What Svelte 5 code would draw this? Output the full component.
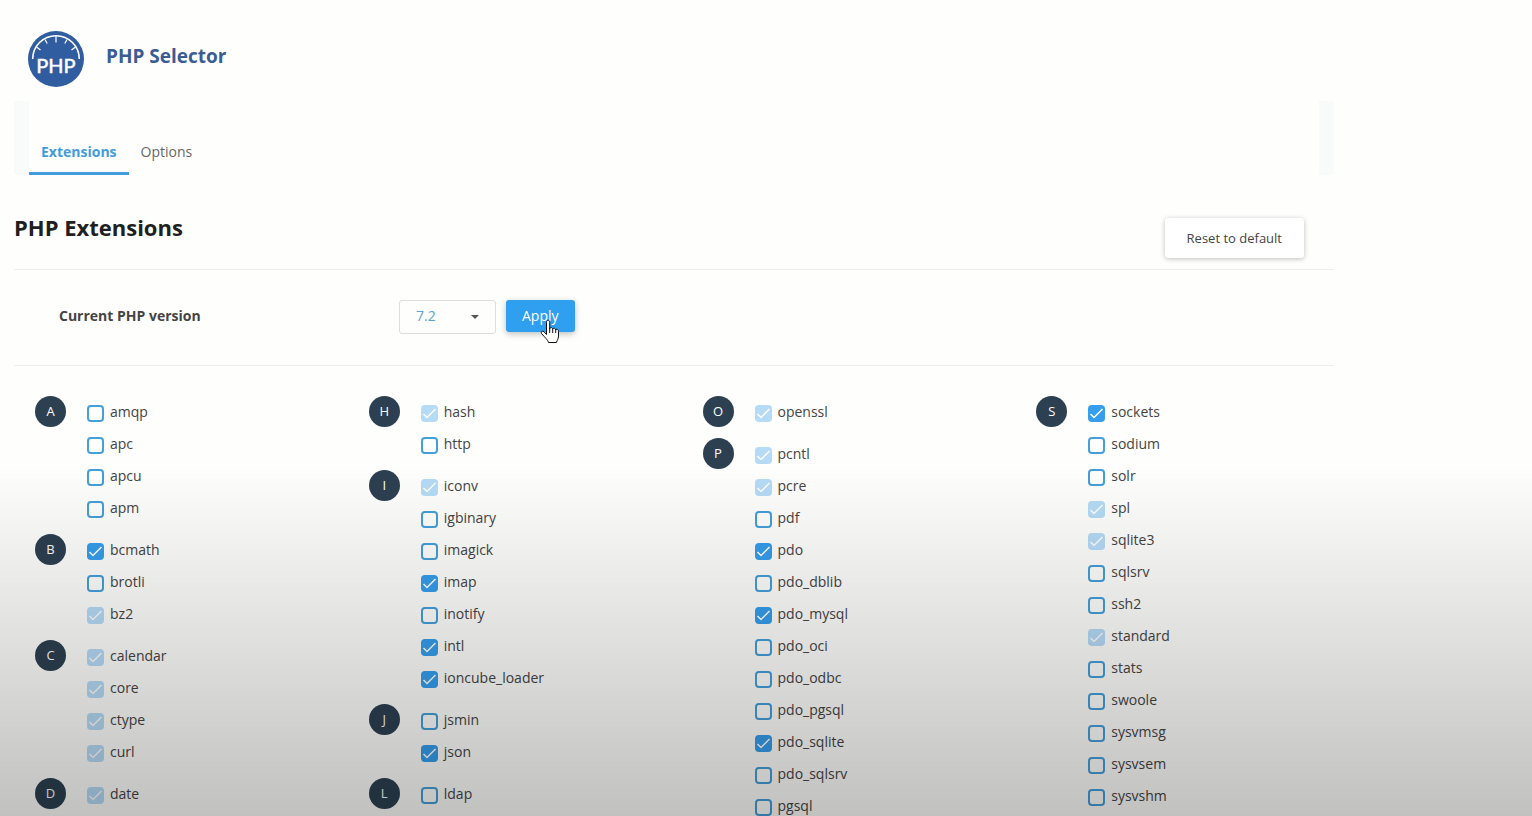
<script>
  const E = 'enabled';
  const L = 'locked';

  const columns = [
    [
      { letter: 'A', items: [['amqp'], ['apc'], ['apcu'], ['apm']] },
      { letter: 'B', items: [['bcmath', E], ['brotli'], ['bz2', L]] },
      { letter: 'C', items: [['calendar', L], ['core', L], ['ctype', L], ['curl', L]] },
      { letter: 'D', items: [['date', L]] }
    ],
    [
      { letter: 'H', items: [['hash', L], ['http']] },
      {
        letter: 'I',
        items: [['iconv', L], ['igbinary'], ['imagick'], ['imap', E], ['inotify'], ['intl', E], ['ioncube_loader', E]]
      },
      { letter: 'J', items: [['jsmin'], ['json', E]] },
      { letter: 'L', items: [['ldap']] }
    ],
    [
      { letter: 'O', items: [['openssl', L]] },
      {
        letter: 'P',
        items: [
          ['pcntl', L], ['pcre', L], ['pdf'], ['pdo', E], ['pdo_dblib'], ['pdo_mysql', E],
          ['pdo_oci'], ['pdo_odbc'], ['pdo_pgsql'], ['pdo_sqlite', E], ['pdo_sqlsrv'], ['pgsql']
        ]
      }
    ],
    [
      {
        letter: 'S',
        items: [
          ['sockets', E], ['sodium'], ['solr'], ['spl', L], ['sqlite3', L], ['sqlsrv'], ['ssh2'],
          ['standard', L], ['stats'], ['swoole'], ['sysvmsg'], ['sysvsem'], ['sysvshm']
        ]
      }
    ]
  ];

  let tab = $state('Extensions');
  let version = $state('7.2');
</script>

<div class="page">
  <header>
    <svg class="logo" viewBox="0 0 56 56" aria-hidden="true">
      <circle cx="28" cy="28" r="28" fill="#2f5d9f" />
      <g fill="none" stroke="#fff">
        <path d="M4.700 28A23.300 23.300 0 0 1 51.300 28" stroke-width="1.600" />
        <path d="M28 5v6.500M17 8.500l2.200 4M39 8.500l-2.200 4M8.500 16l4 3M47.500 16l-4 3" stroke-width="1.200" />
      </g>
      <text x="28" y="42" text-anchor="middle">PHP</text>
    </svg>
    <h1>PHP Selector</h1>
  </header>

  <nav>
    {#each ['Extensions', 'Options'] as name}
      <a href="#{name}" class:active={tab === name} onclick={() => (tab = name)}>{name}</a>
    {/each}
  </nav>

  <section class="heading">
    <h2>PHP Extensions</h2>
    <button class="reset">Reset to default</button>
  </section>

  <section class="version">
    <label for="version">Current PHP version</label>
    <div class="select">
      <select id="version" bind:value={version}>
        <option>7.1</option>
        <option>7.2</option>
        <option>7.3</option>
      </select>
      <svg viewBox="0 0 8 4" aria-hidden="true"><path d="M0 0h8L4 4z" fill="#555" /></svg>
    </div>
    <div class="apply-wrap">
      <button class="apply">Apply</button>
      <svg class="pointer" viewBox="0 0 20 25" aria-hidden="true">
        <path
          d="M6.500 15.500V3.200C6.500 .7 9.700 .7 9.700 3.200V10C9.700 8 12.500 8 12.700 10.200C13 8.700 15.500 8.800 15.700 11C16.200 9.800 18.500 10 18.500 12.200V17C18.500 20 17 21 16.500 23.500H8.500C8 21 5 18.500 1.500 14.500C.5 12.500 2.500 11.500 4 12.700Z"
          fill="#fff" stroke="#111" stroke-width="1" stroke-linejoin="round"
        />
        <path d="M9.700 9.500v4.500M12.700 10v4M15.700 11v3" fill="none" stroke="#111" stroke-width="1" />
      </svg>
    </div>
  </section>

  <section class="extensions">
    {#each columns as groups}
      <div class="column">
        {#each groups as group}
          <div class="group">
            <span class="letter">{group.letter}</span>
            <ul>
              {#each group.items as [name, state]}
                <li>
                  <label>
                    <input type="checkbox" checked={!!state} disabled={state === L} />
                    <span>{name}</span>
                  </label>
                </li>
              {/each}
            </ul>
          </div>
        {/each}
      </div>
    {/each}
  </section>
</div>

<div class="shade"></div>

<style>
  :global(body) {
    background: #fefefd;
    height: 100vh;
    overflow: hidden;
  }

  .page {
    box-sizing: border-box;
    max-width: 1348px;
    padding: 31px 14px 0;
    font-family: 'Open Sans', 'Noto Sans', sans-serif;
    font-size: 14px;
    line-height: 20px;
    color: #444;
  }

  header {
    display: flex;
    gap: 22px;
    padding-left: 14px;
  }

  .logo {
    width: 56px;
    height: 56px;
  }

  .logo text {
    font: 20px Lato, sans-serif;
    fill: #fff;
    stroke: #fff;
    stroke-width: 0.5px;
  }

  h1 {
    margin: 12px 0 0;
    font-size: 19px;
    line-height: 26px;
    color: #3b5c92;
  }

  nav {
    display: flex;
    align-items: flex-end;
    height: 74px;
    margin-top: 14px;
    border: solid #f9fafa;
    border-width: 0 15px;
    border-radius: 3px;
  }

  nav a {
    padding: 10px 12px;
    border-bottom: 3px solid transparent;
    color: #666;
    text-decoration: none;
  }

  nav a.active {
    border-color: #429cda;
    color: #429cda;
    font-weight: 700;
  }

  .heading {
    display: flex;
    justify-content: space-between;
    margin-top: 38px;
    padding: 0 30px 11px 0;
    border-bottom: 1px solid #eee;
  }

  h2 {
    margin: 0;
    font-size: 22px;
    line-height: 28px;
    color: #1f1f1f;
  }

  button {
    border: 0;
    border-radius: 3px;
    font-family: inherit;
    cursor: pointer;
  }

  .reset {
    height: 40px;
    margin-top: 5px;
    padding: 0 22px;
    background: #fff;
    box-shadow: 0 1px 5px rgba(0, 0, 0, 0.25);
    color: #444;
    font-size: 13px;
  }

  .version {
    display: flex;
    padding: 30px 0 31px 45px;
    border-bottom: 1px solid #eee;
  }

  .version label {
    width: 340px;
    padding-top: 6px;
    font-weight: 700;
  }

  .select {
    position: relative;
    margin-right: 10px;
  }

  select {
    appearance: none;
    width: 97px;
    height: 34px;
    padding: 0 16px 2px;
    border: 1px solid #ddd;
    border-radius: 3px;
    background: transparent;
    color: #5ba3d0;
    font: inherit;
  }

  .select svg {
    position: absolute;
    right: 17px;
    top: 15px;
    width: 8px;
    height: 4px;
    pointer-events: none;
  }

  .apply-wrap {
    position: relative;
  }

  .apply {
    height: 32px;
    padding: 0 16px 2px;
    background: #2f9ff0;
    box-shadow: 0 2px 6px rgba(0, 0, 0, 0.25);
    color: #fff;
    font-size: 14px;
    font-weight: 500;
  }

  .pointer {
    position: absolute;
    left: 34px;
    top: 19px;
    width: 20px;
    height: 25px;
    pointer-events: none;
  }

  .extensions {
    display: grid;
    grid-template-columns: repeat(4, 1fr);
    gap: 36px;
    padding: 30px 0 0 21px;
  }

  .column {
    display: flex;
    flex-direction: column;
    gap: 10px;
  }

  .group {
    display: flex;
    align-items: flex-start;
    gap: 21px;
  }

  .letter {
    width: 31px;
    border-radius: 50%;
    background: #2d4051;
    color: #fff;
    font-size: 13px;
    font-weight: 500;
    line-height: 31px;
    text-align: center;
  }

  ul {
    margin: 0;
    padding: 0;
    list-style: none;
  }

  li label {
    display: flex;
    align-items: center;
    gap: 6px;
    height: 32px;
  }

  input {
    appearance: none;
    box-sizing: border-box;
    width: 17px;
    height: 17px;
    margin: 3px 0 0;
    border: 2px solid #459fda;
    border-radius: 4px;
  }

  input:checked {
    border: 0;
    background: #369eec url("data:image/svg+xml,%3Csvg xmlns='http://www.w3.org/2000/svg' viewBox='0 0 17 17'%3E%3Cpath d='M2.500 9l3.500 3.500 8.500-8.500' fill='none' stroke='%23fff' stroke-width='1.500'/%3E%3C/svg%3E");
  }

  input:disabled {
    opacity: 0.36;
  }

  /* darkens the lower part of the window */
  .shade {
    position: fixed;
    inset: auto 0 0;
    height: 43vh;
    background: linear-gradient(transparent, rgba(0, 0, 0, 0.24));
    pointer-events: none;
  }
</style>
